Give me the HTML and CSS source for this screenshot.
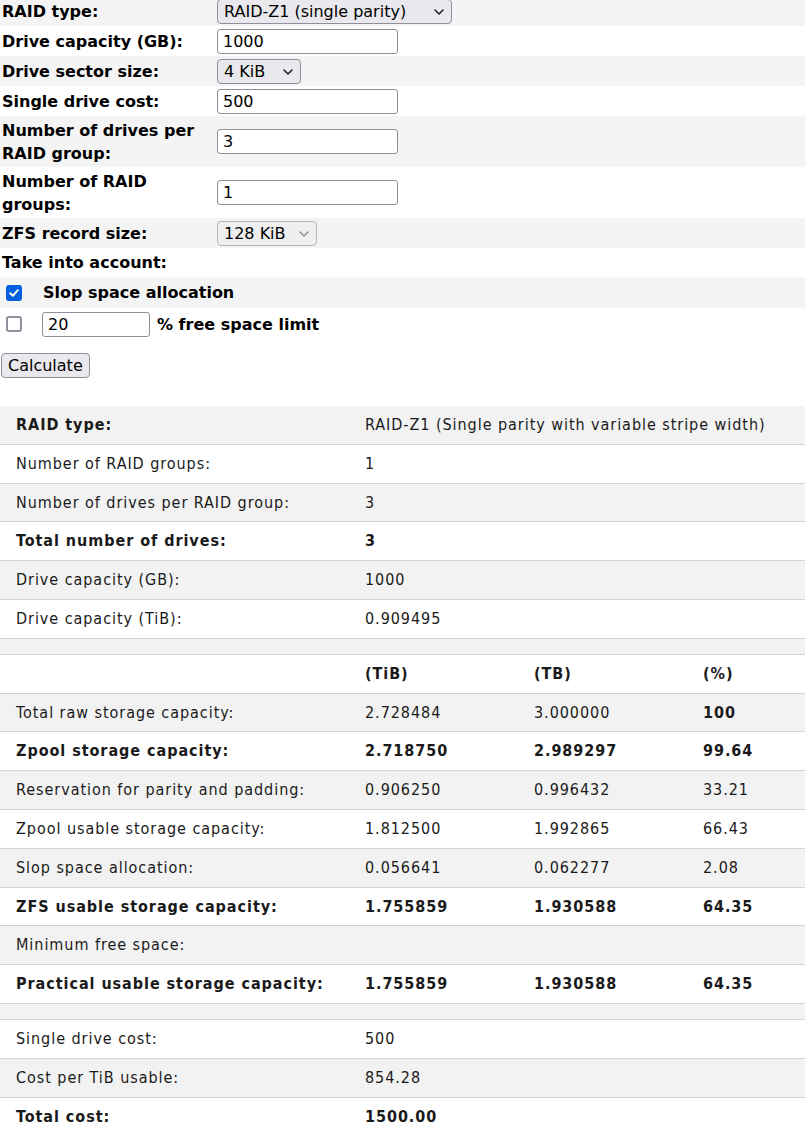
FILE: index.html
```html
<!DOCTYPE html>
<html>
<head>
<meta charset="utf-8">
<title>ZFS RAID calculator</title>
<link rel="stylesheet" href="styles.css">
</head>
<body>
<form class="form">
  <div class="frow">
    <div class="flabel">RAID type:</div>
    <div class="fctl">
      <span class="sel sel-raid">
        <select><option>RAID-Z1 (single parity)</option></select>
        <svg class="chev" width="10" height="6" viewBox="0 0 10 6"><path d="M1 1 L5 5 L9 1" fill="none" stroke="#1b1b1b" stroke-width="1.5" stroke-linecap="round" stroke-linejoin="round"/></svg>
      </span>
    </div>
  </div>
  <div class="frow">
    <div class="flabel">Drive capacity (GB):</div>
    <div class="fctl"><input class="txt" type="text" value="1000"></div>
  </div>
  <div class="frow">
    <div class="flabel">Drive sector size:</div>
    <div class="fctl">
      <span class="sel sel-sector">
        <select><option>4 KiB</option></select>
        <svg class="chev" width="10" height="6" viewBox="0 0 10 6"><path d="M1 1 L5 5 L9 1" fill="none" stroke="#1b1b1b" stroke-width="1.5" stroke-linecap="round" stroke-linejoin="round"/></svg>
      </span>
    </div>
  </div>
  <div class="frow">
    <div class="flabel">Single drive cost:</div>
    <div class="fctl"><input class="txt" type="text" value="500"></div>
  </div>
  <div class="frow frow-two">
    <div class="flabel">Number of drives per RAID group:</div>
    <div class="fctl"><input class="txt" type="text" value="3"></div>
  </div>
  <div class="frow frow-two">
    <div class="flabel">Number of RAID groups:</div>
    <div class="fctl"><input class="txt" type="text" value="1"></div>
  </div>
  <div class="frow">
    <div class="flabel">ZFS record size:</div>
    <div class="fctl">
      <span class="sel sel-record">
        <select><option>128 KiB</option></select>
        <svg class="chev chev-light" width="10" height="6" viewBox="0 0 10 6"><path d="M1 1 L5 5 L9 1" fill="none" stroke="#8a8a8a" stroke-width="1.3" stroke-linecap="round" stroke-linejoin="round"/></svg>
      </span>
    </div>
  </div>
  <div class="frow frow-take">
    <div class="flabel">Take into account:</div>
    <div class="fctl"></div>
  </div>
  <div class="crow crow-slop">
    <span class="cbcell"><span class="cb cb-on"><svg width="12" height="12" viewBox="0 0 12 12"><path d="M2.2 6.2 L4.9 8.8 L9.8 3.2" fill="none" stroke="#fff" stroke-width="2" stroke-linecap="round" stroke-linejoin="round"/></svg></span></span>
    <span class="clabel">Slop space allocation</span>
  </div>
  <div class="crow crow-free">
    <span class="cbcell"><span class="cb"></span></span>
    <input class="txt txt-small" type="text" value="20">
    <span class="clabel clabel-after">% free space limit</span>
  </div>
  <button type="button" class="btn">Calculate</button>
</form>

<table class="res">
  <colgroup>
    <col class="c1"><col class="c2"><col class="c3"><col class="c4">
  </colgroup>
  <tbody>
    <tr class="b"><td>RAID type:</td><td colspan="3" class="n">RAID-Z1 (Single parity with variable stripe width)</td></tr>
    <tr><td>Number of RAID groups:</td><td colspan="3">1</td></tr>
    <tr><td>Number of drives per RAID group:</td><td colspan="3">3</td></tr>
    <tr class="b"><td>Total number of drives:</td><td colspan="3">3</td></tr>
    <tr><td>Drive capacity (GB):</td><td colspan="3">1000</td></tr>
    <tr><td>Drive capacity (TiB):</td><td colspan="3">0.909495</td></tr>
    <tr class="sp"><td colspan="4"></td></tr>
    <tr class="b"><td></td><td>(TiB)</td><td>(TB)</td><td>(%)</td></tr>
    <tr><td>Total raw storage capacity:</td><td>2.728484</td><td>3.000000</td><td class="bold">100</td></tr>
    <tr class="b"><td>Zpool storage capacity:</td><td>2.718750</td><td>2.989297</td><td>99.64</td></tr>
    <tr><td>Reservation for parity and padding:</td><td>0.906250</td><td>0.996432</td><td>33.21</td></tr>
    <tr><td>Zpool usable storage capacity:</td><td>1.812500</td><td>1.992865</td><td>66.43</td></tr>
    <tr><td>Slop space allocation:</td><td>0.056641</td><td>0.062277</td><td>2.08</td></tr>
    <tr class="b"><td>ZFS usable storage capacity:</td><td>1.755859</td><td>1.930588</td><td>64.35</td></tr>
    <tr><td>Minimum free space:</td><td></td><td></td><td></td></tr>
    <tr class="b"><td>Practical usable storage capacity:</td><td>1.755859</td><td>1.930588</td><td>64.35</td></tr>
    <tr class="sp"><td colspan="4"></td></tr>
    <tr><td>Single drive cost:</td><td colspan="3">500</td></tr>
    <tr><td>Cost per TiB usable:</td><td colspan="3">854.28</td></tr>
    <tr class="b"><td>Total cost:</td><td colspan="3">1500.00</td></tr>
  </tbody>
</table>
</body>
</html>
```

FILE: styles.css
```css
html, body {
  margin: 0;
  padding: 0;
  background: #fff;
}

body {
  font-family: "DejaVu Sans", Verdana, sans-serif;
  color: #000;
}

.form {
  margin: -4px 0 0 0;
}

.frow {
  display: grid;
  grid-template-columns: 217px 1fr;
  align-items: center;
  min-height: 30px;
}

.frow:nth-child(odd),
.crow:nth-child(odd) {
  background: #f4f4f4;
}

.flabel {
  font-weight: bold;
  font-size: 16px;
  line-height: 23px;
  padding: 2px 12px 2px 2px;
}

.frow-two .flabel {
  padding-top: 2.5px;
  padding-bottom: 2.5px;
}

.fctl {
  display: flex;
  align-items: center;
}

.frow-take {
  min-height: 29px;
}

.sel {
  position: relative;
  display: inline-block;
  height: 25px;
}

.sel select {
  -webkit-appearance: none;
  appearance: none;
  box-sizing: border-box;
  height: 25px;
  margin: 0;
  padding: 0 26px 0 6px;
  border: 1px solid #8f8f9d;
  border-radius: 4px;
  background: #e9e9ed;
  color: #000;
  font-family: "DejaVu Sans", Verdana, sans-serif;
  font-size: 16px;
  line-height: 23px;
}

.sel-raid select { width: 235px; }
.sel-sector select { width: 84px; }
.sel-record select { width: 100px; background: #efeff2; border-color: #b4b4bd; }

.chev {
  position: absolute;
  right: 8px;
  top: 10px;
  pointer-events: none;
}

.txt {
  box-sizing: border-box;
  width: 181px;
  height: 25px;
  margin: 0;
  padding: 0 5px;
  border: 1px solid #8f8f9d;
  border-radius: 3px;
  background: #fff;
  color: #000;
  font-family: "DejaVu Sans", Verdana, sans-serif;
  font-size: 16px;
}

.txt-small {
  width: 108px;
}

.crow {
  display: flex;
  align-items: center;
}

.crow-slop { min-height: 31px; }
.crow-free { min-height: 32px; }

.cbcell {
  display: flex;
  width: 42px;
  padding-left: 6px;
  box-sizing: border-box;
}

.cb {
  box-sizing: border-box;
  width: 16px;
  height: 16px;
  border: 2px solid #8f8f9d;
  border-radius: 3px;
  background: #fff;
  display: flex;
  align-items: center;
  justify-content: center;
}

.cb-on {
  background: #0060df;
  border-color: #0060df;
}

.clabel {
  font-weight: bold;
  font-size: 16px;
  line-height: 23px;
  padding-left: 1px;
}

.clabel-after {
  padding-left: 7px;
}

.btn {
  display: block;
  box-sizing: border-box;
  height: 25px;
  margin: 13px 0 0 1px;
  padding: 0 6px;
  border: 1px solid #8f8f9d;
  border-radius: 4px;
  background: #e9e9ed;
  color: #000;
  font-family: "DejaVu Sans", Verdana, sans-serif;
  font-size: 16px;
  line-height: 23px;
}

.res {
  width: 100%;
  margin-top: 28px;
  border-collapse: collapse;
  table-layout: fixed;
  font-family: "DejaVu Sans Condensed", "DejaVu Sans", sans-serif;
  font-size: 16px;
  letter-spacing: 0.95px;
  color: #1a1a1a;
}

.c1 { width: 349px; }
.c2 { width: 169px; }
.c3 { width: 169px; }

.res td {
  padding: 10px 16px;
  line-height: 17.8px;
  border-bottom: 1px solid #d3d3d3;
  text-align: left;
  white-space: nowrap;
  overflow: visible;
}

.res tr:nth-child(odd) td {
  background: #f2f2f2;
}

.res tr.b td {
  font-weight: bold;
}

.res tr.b td.n {
  font-weight: normal;
}

.res td.bold {
  font-weight: bold;
}

.res tr.sp td {
  padding: 0;
  height: 15px;
}
```
